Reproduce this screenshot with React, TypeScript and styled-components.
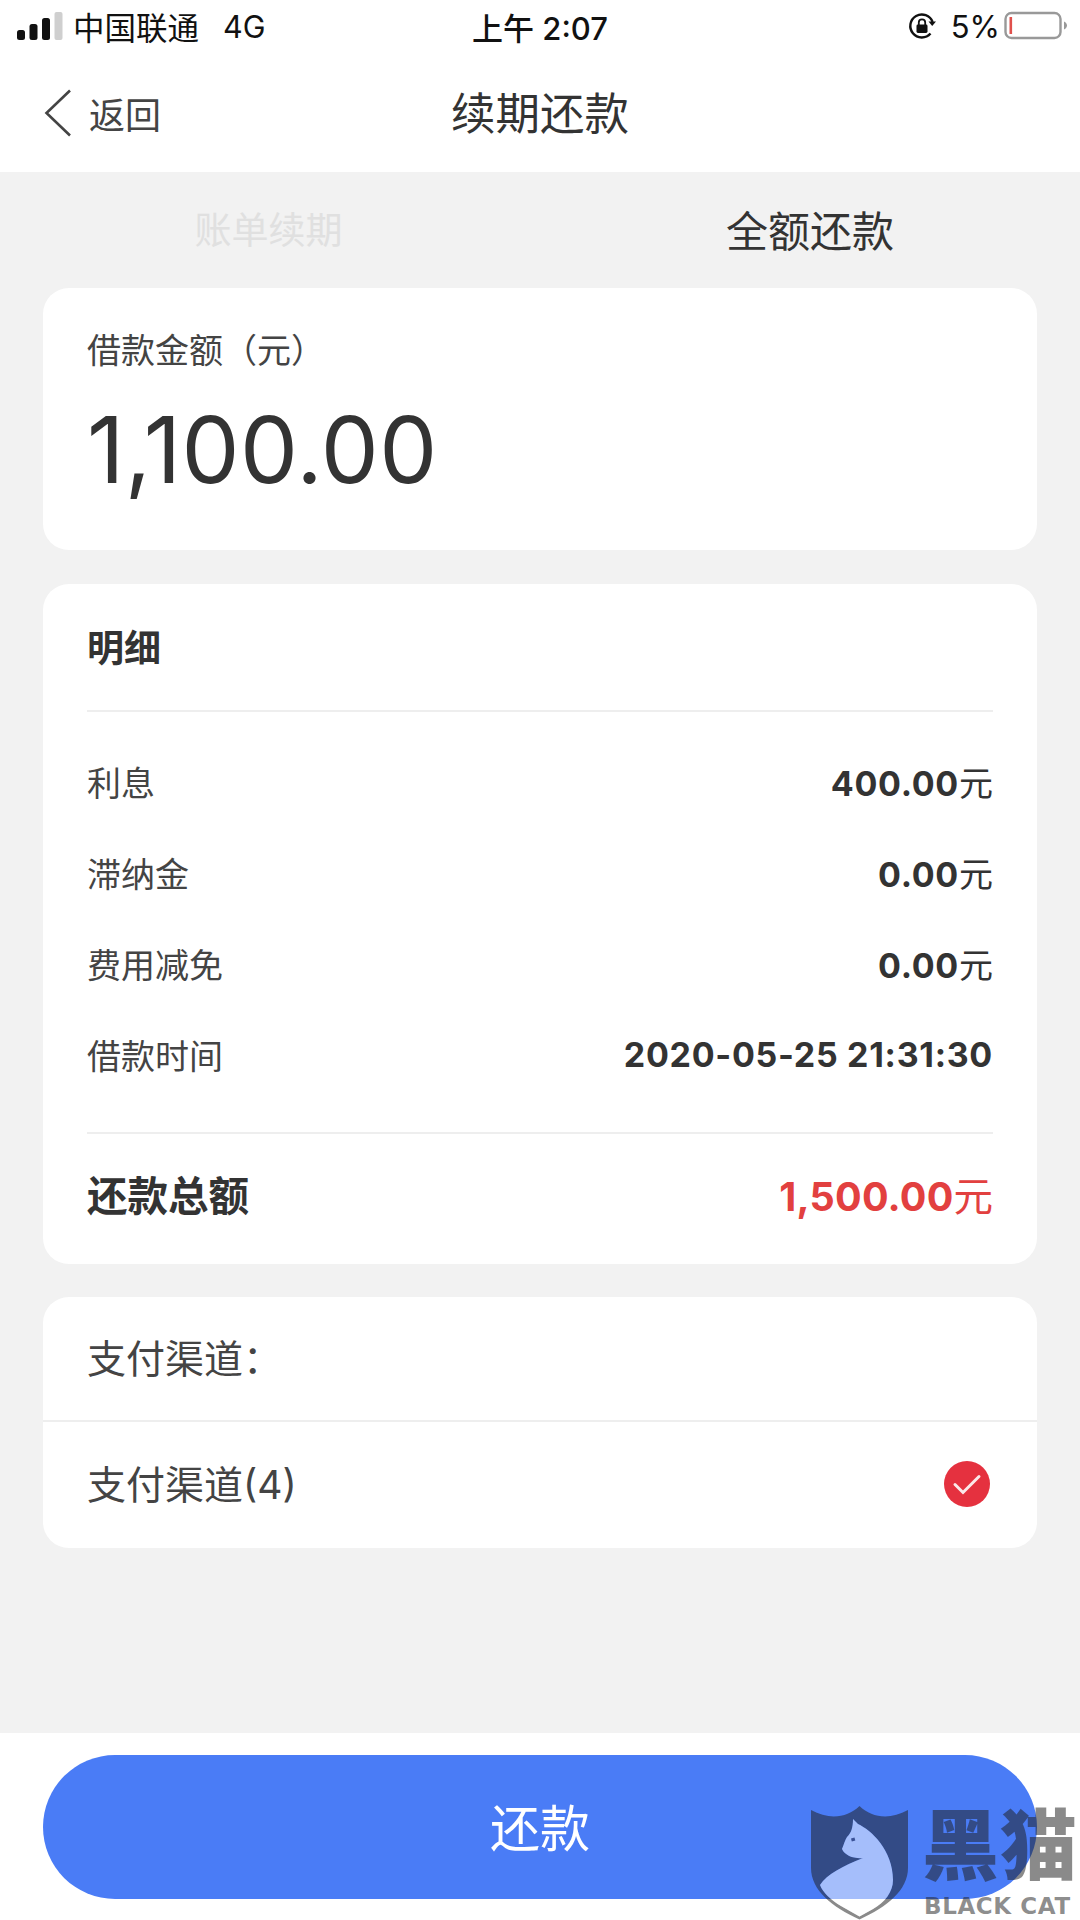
import React from "react";
import styled, { createGlobalStyle } from "styled-components";

const GlobalStyle = createGlobalStyle`
  html, body {
    margin: 0;
    padding: 0;
    background: #f2f2f2;
    font-family: Inter, "Noto Sans CJK SC", sans-serif;
  }
`;

const Page = styled.div`
  position: relative;
  width: 1080px;
  height: 1920px;
  overflow: hidden;
  display: flex;
  flex-direction: column;
  background: #f2f2f2;
  color: #333;
`;

const StatusBar = styled.div`
  height: 54px;
  padding: 0 13px 2px 17px;
  box-sizing: border-box;
  display: grid;
  grid-template-columns: 1fr auto 1fr;
  align-items: center;
  background: #fff;
  color: #111;
  font-size: 30px;
`;

const StatusLeft = styled.div`
  display: flex;
  align-items: center;
`;

const Carrier = styled.span`
  margin-left: 10px;
  font-size: 31.5px;
`;

const Network = styled.span`
  margin-left: 24px;
  font-size: 30.5px;
`;

const Clock = styled.div`
  font-size: 31px;
  font-weight: 500;
  margin-left: -4px;
`;

const StatusRight = styled.div`
  display: flex;
  align-items: center;
  justify-content: flex-end;
`;

const Percent = styled.span`
  margin: 0 4px 0 15px;
  font-size: 31px;
`;

const NavBar = styled.div`
  height: 118px;
  position: relative;
  display: flex;
  align-items: center;
  justify-content: center;
  background: #fff;
`;

const BackLink = styled.div`
  position: absolute;
  left: 44px;
  top: 33px;
  display: flex;
  align-items: center;
  gap: 17px;
  font-size: 36px;
  color: #444;
`;

const NavTitle = styled.div`
  font-size: 44.5px;
  color: #333;
  margin-bottom: 6px;
`;

const Tabs = styled.div`
  height: 116px;
  padding-bottom: 4px;
  box-sizing: border-box;
  display: grid;
  grid-template-columns: 1fr 1fr;
  align-items: center;
`;

const Tab = styled.div<{ $active?: boolean }>`
  text-align: center;
  font-size: ${(p) => (p.$active ? 42 : 37)}px;
  color: ${(p) => (p.$active ? "#333" : "#e0e0e0")};
  margin-right: ${(p) => (p.$active ? 0 : 3)}px;
`;

const Content = styled.div`
  flex: 1;
  padding: 0 43px;
  display: flex;
  flex-direction: column;
  gap: 34px;
`;

const Card = styled.section`
  background: #fff;
  border-radius: 26px;
  overflow: hidden;
`;

const AmountCard = styled(Card)`
  height: 262px;
  padding: 43px 44px 0;
  box-sizing: border-box;
`;

const AmountLabel = styled.div`
  font-size: 34px;
  line-height: 40px;
  color: #444;
`;

const AmountValue = styled.div`
  margin: 24px 0 0;
  font-size: 92px;
  line-height: 110px;
  font-weight: 400;
  color: #333;
  letter-spacing: 0.4px;
`;

const DetailCard = styled(Card)`
  height: 680px;
  padding: 0 44px;
  box-sizing: border-box;
  margin-bottom: -1px;
`;

const DetailTitle = styled.div`
  height: 128px;
  padding-top: 3px;
  box-sizing: border-box;
  line-height: 124px;
  font-size: 37px;
  font-weight: 700;
  border-bottom: 2px solid #eeeeee;
  color: #333;
`;

const DetailRows = styled.div`
  padding: 24px 0 32px;
  border-bottom: 2px solid #eeeeee;
`;

const DetailRow = styled.div`
  height: 91px;
  display: flex;
  align-items: center;
  justify-content: space-between;
  font-size: 34px;
  color: #444;
`;

const RowValue = styled.div`
  font-size: 34px;
  font-weight: 700;
  color: #333;
  letter-spacing: 0.7px;
`;

const Unit = styled.span`
  font-weight: 400;
  letter-spacing: 0;
`;

const TotalRow = styled.div`
  height: 118px;
  display: flex;
  align-items: center;
  justify-content: space-between;
`;

const TotalLabel = styled.div`
  font-size: 40.5px;
  font-weight: 700;
  color: #333;
`;

const TotalValue = styled(RowValue)`
  font-size: 39.5px;
  letter-spacing: 0.2px;
  color: #e2403f;
`;

const PayCard = styled(Card)`
  height: 251px;
`;

const PayHeader = styled.div`
  height: 125px;
  padding: 0 44px 5px;
  box-sizing: border-box;
  display: flex;
  align-items: center;
  font-size: 39px;
  color: #444;
  border-bottom: 2px solid #eeeeee;
`;

const PayRow = styled.div`
  height: 124px;
  padding: 0 47px 5px 44px;
  box-sizing: border-box;
  display: flex;
  align-items: center;
  justify-content: space-between;
  font-size: 39px;
  color: #444;
`;

const CheckSvg = styled.svg`
  margin-top: 5px;
`;

const Footer = styled.div`
  height: 187px;
  box-sizing: border-box;
  padding: 22px 43px 0;
  background: #fff;
`;

const PayButton = styled.div`
  height: 144px;
  padding-bottom: 4px;
  box-sizing: border-box;
  border-radius: 72px;
  background: #4a7cf6;
  color: #fff;
  font-size: 50px;
  display: flex;
  align-items: center;
  justify-content: center;
`;

const Watermark = styled.div`
  position: absolute;
  left: 811px;
  top: 1806px;
  width: 269px;
  height: 114px;
`;

const WatermarkName = styled.div`
  position: absolute;
  left: 111px;
  top: -13px;
  font-family: "Noto Sans CJK SC", sans-serif;
  font-size: 77px;
  line-height: 96px;
  font-weight: 900;
  letter-spacing: 1px;
  white-space: nowrap;
  color: rgba(30, 30, 30, 0.52);
`;

const WatermarkLatin = styled.div`
  position: absolute;
  left: 113px;
  top: 88px;
  font-family: "DejaVu Sans", sans-serif;
  font-size: 23px;
  line-height: 24px;
  font-weight: 700;
  letter-spacing: 0.6px;
  white-space: nowrap;
  color: rgba(30, 30, 30, 0.52);
`;

const ShieldSvg = styled.svg`
  position: absolute;
  left: 0;
  top: 0;
`;

const detailRows = [
  { label: "利息", value: "400.00", unit: "元" },
  { label: "滞纳金", value: "0.00", unit: "元" },
  { label: "费用减免", value: "0.00", unit: "元" },
  { label: "借款时间", value: "2020-05-25 21:31:30", unit: "" },
];

function SignalIcon() {
  return (
    <svg width="46" height="28" viewBox="0 0 46 28">
      <rect x="0" y="18" width="8" height="10" rx="2.5" fill="#111" />
      <rect x="12.5" y="12" width="8" height="16" rx="2.5" fill="#111" />
      <rect x="25" y="6" width="8" height="22" rx="2.5" fill="#111" />
      <rect x="37.5" y="0" width="8" height="28" rx="2" fill="#cfcfcf" />
    </svg>
  );
}

function RotationLockIcon() {
  return (
    <svg width="28" height="28" viewBox="0 0 28 28">
      <path d="M22.5 21.5A11.5 11.5 0 1 1 24.6 10" fill="none" stroke="#111" strokeWidth="2.4" />
      <path d="M20.5 9.5h7.5l-3.8 4.6z" fill="#111" />
      <rect x="8.5" y="12.5" width="11" height="8.5" rx="1.4" fill="#111" />
      <path d="M10.8 13V10.6a3.2 3.2 0 0 1 6.4 0V13" fill="none" stroke="#111" strokeWidth="1.8" />
    </svg>
  );
}

function BatteryIcon() {
  return (
    <svg width="63" height="30" viewBox="0 0 63 30">
      <rect x="1.5" y="2" width="55" height="25" rx="6" fill="#fff" stroke="#999" strokeWidth="2.4" />
      <rect x="5.5" y="6" width="2.6" height="17" fill="#e0504c" />
      <path d="M60 10.5c2 1 3 2.6 3 4s-1 3-3 4z" fill="#999" />
    </svg>
  );
}

function BackIcon() {
  return (
    <svg width="28" height="48" viewBox="0 0 28 48">
      <path d="M26 1.5L2.5 24 26 46.5" fill="none" stroke="#444" strokeWidth="2.6" />
    </svg>
  );
}

function CheckedIcon() {
  return (
    <CheckSvg width="46" height="46" viewBox="0 0 46 46">
      <circle cx="23" cy="23" r="23" fill="#e5313f" />
      <path d="M11 23.5l8 8L35 15.5" fill="none" stroke="#fbe9ea" strokeWidth="3" strokeLinecap="round" />
    </CheckSvg>
  );
}

const catPath =
  "M42 13L47 18C60 24 82 44 82 74C82 86 74 96 62 103L48.5 110.5L30 100C20 94 12 87 9 79C16 68 32 60 52 52C44 53 34 50 31 43C33 38 34 34 36 31C40 27 42 22 42 13Z";

function ShieldLogo() {
  return (
    <ShieldSvg width="98" height="114" viewBox="0 0 98 114">
      <path
        d={`M0 4C18 14 36 12 48.5 0C61 12 79 14 97 4V62C97 84 76 101 48.5 113.5C21 101 0 84 0 62Z${catPath}`}
        fillRule="evenodd"
        fill="rgba(30,30,30,0.52)"
      />
      <path d={catPath} fill="rgba(255,255,255,0.5)" />
      <path d="M40 32.5l3.5-1 .8 3-3.5 1z" fill="#3a5196" />
    </ShieldSvg>
  );
}

export default function App() {
  return (
    <Page>
      <GlobalStyle />
      <StatusBar>
        <StatusLeft>
          <SignalIcon />
          <Carrier>中国联通</Carrier>
          <Network>4G</Network>
        </StatusLeft>
        <Clock>上午 2:07</Clock>
        <StatusRight>
          <RotationLockIcon />
          <Percent>5%</Percent>
          <BatteryIcon />
        </StatusRight>
      </StatusBar>
      <NavBar>
        <BackLink>
          <BackIcon />
          返回
        </BackLink>
        <NavTitle>续期还款</NavTitle>
      </NavBar>
      <Tabs>
        <Tab>账单续期</Tab>
        <Tab $active>全额还款</Tab>
      </Tabs>
      <Content>
        <AmountCard>
          <AmountLabel>借款金额（元）</AmountLabel>
          <AmountValue>1,100.00</AmountValue>
        </AmountCard>
        <DetailCard>
          <DetailTitle>明细</DetailTitle>
          <DetailRows>
            {detailRows.map((row) => (
              <DetailRow key={row.label}>
                {row.label}
                <RowValue>
                  {row.value}
                  <Unit>{row.unit}</Unit>
                </RowValue>
              </DetailRow>
            ))}
          </DetailRows>
          <TotalRow>
            <TotalLabel>还款总额</TotalLabel>
            <TotalValue>
              1,500.00<Unit>元</Unit>
            </TotalValue>
          </TotalRow>
        </DetailCard>
        <PayCard>
          <PayHeader>支付渠道：</PayHeader>
          <PayRow>
            支付渠道(4)
            <CheckedIcon />
          </PayRow>
        </PayCard>
      </Content>
      <Footer>
        <PayButton>还款</PayButton>
      </Footer>
      <Watermark>
        <ShieldLogo />
        <WatermarkName>黑猫</WatermarkName>
        <WatermarkLatin>BLACK CAT</WatermarkLatin>
      </Watermark>
    </Page>
  );
}
